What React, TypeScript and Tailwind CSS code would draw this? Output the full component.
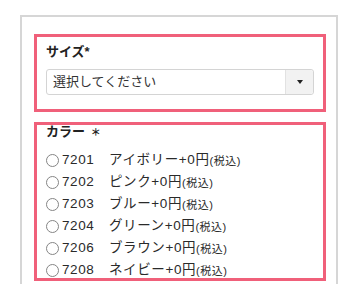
import React from 'react';

const colors = [
  { code: '7201', name: 'アイボリー' },
  { code: '7202', name: 'ピンク' },
  { code: '7203', name: 'ブルー' },
  { code: '7204', name: 'グリーン' },
  { code: '7206', name: 'ブラウン' },
  { code: '7208', name: 'ネイビー' },
];

const font = { fontFamily: '"Liberation Sans", "Noto Sans CJK JP", sans-serif' };

const App: React.FC = () => {
  return (
    <div className="h-[284px] overflow-hidden bg-white pt-[15px] pl-[20px] text-[#333]" style={font}>
      <div className="w-[318px] h-[300px] border-2 border-[#d6d6d6] pt-[17px] pl-[12px] pr-[10px]">
        {/* Size */}
        <div className="border-[3px] border-[#f0607a] pt-[6px] pb-[14px] px-[9px]">
          <div className="text-[13px] leading-[18px] font-bold text-[#222]">サイズ*</div>
          <div className="mt-[8px] flex h-[26px] rounded-[3px] border border-[#d4d4d4] bg-white">
            <div className="flex-1 flex items-center pl-[6px] text-[13px] text-[#333]">選択してください</div>
            <div className="w-[28px] flex items-center justify-center border-l border-[#e2e2e2] bg-[#f2f2f2] rounded-r-[3px]">
              <div className="w-0 h-0 border-l-[3px] border-r-[3px] border-t-[4px] border-l-transparent border-r-transparent border-t-[#222]" />
            </div>
          </div>
        </div>

        {/* Colour */}
        <div className="mt-[10px] h-[159px] border-[3px] border-[#f0607a] px-[9px]">
          <div className="text-[13px] leading-[14px] font-bold text-[#222]">
            カラー <span className="ml-[2px] text-[10px]">＊</span>
          </div>
          <div className="mt-[9px]">
            {colors.map((c) => (
              <div key={c.code} className="flex items-center h-[22px] text-[13.5px] tracking-[0.6px] text-[#2a2a2a]">
                <span className="w-[13px] h-[13px] rounded-full border-[1.5px] border-[#858585] bg-white shrink-0" />
                <span className="ml-[3px] w-[47px]">{c.code}</span>
                <span>{c.name}+0円</span>
                <span className="text-[11px] tracking-[0.5px] mt-[2px]">(税込)</span>
              </div>
            ))}
          </div>
        </div>
      </div>
    </div>
  );
};

export default App;
